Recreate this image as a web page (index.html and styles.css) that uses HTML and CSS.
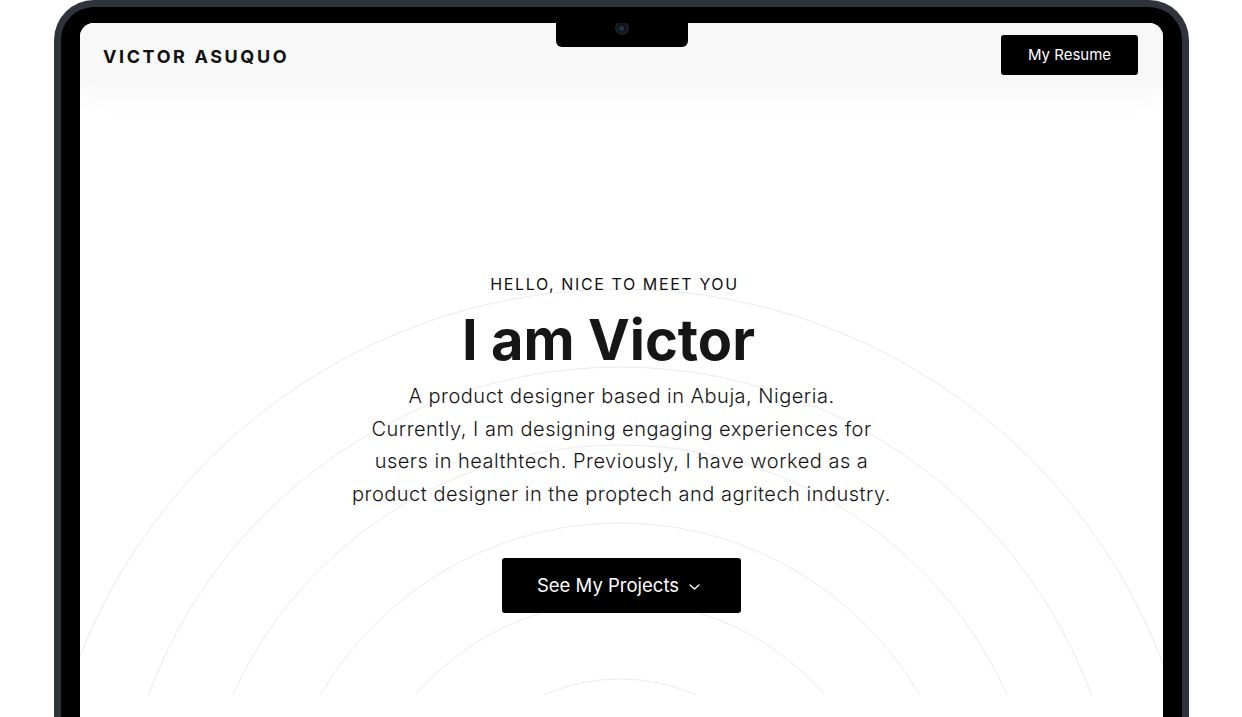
FILE: index.html
```html
<!DOCTYPE html>
<html lang="en">
<head>
<meta charset="utf-8">
<title>Victor Asuquo</title>
<link rel="stylesheet" href="styles.css">
</head>
<body>
<div class="device">
  <div class="screen">
    <div class="notch"><span class="camera"><span class="lens"></span></span></div>
    <header class="topbar">
      <a class="logo" href="#">VICTOR ASUQUO</a>
      <a class="btn btn-resume" href="#">My Resume</a>
    </header>
    <section class="hero">
      <svg class="rings" viewBox="0 0 1083 608" preserveAspectRatio="none" aria-hidden="true">
        <circle cx="540" cy="783" r="191"/>
        <circle cx="540" cy="783" r="269"/>
        <circle cx="540" cy="783" r="347"/>
        <circle cx="540" cy="783" r="425"/>
        <circle cx="540" cy="783" r="503"/>
        <circle cx="540" cy="783" r="581"/>
      </svg>
      <div class="hero-content">
        <p class="eyebrow">HELLO, NICE TO MEET YOU</p>
        <h1 class="title">I am Victor</h1>
        <p class="intro">A product designer based in Abuja, Nigeria.<br>Currently, I am designing engaging experiences for<br>users in healthtech. Previously, I have worked as a<br>product designer in the proptech and agritech industry.</p>
        <a class="btn btn-projects" href="#">See My Projects
          <svg class="chev" viewBox="0 0 11 6" aria-hidden="true"><polyline points="1,1 5.5,5 10,1"/></svg>
        </a>
      </div>
    </section>
  </div>
</div>
</body>
</html>
```
FILE: styles.css
```css
* { box-sizing: border-box; }
html, body { margin: 0; padding: 0; background: #fff; overflow: hidden; }
body { font-family: "Inter", "Lato", sans-serif; color: #1a1a1a; }

.device {
  margin-left: 54px;
  width: 1135px;
  height: 717px;
  border: 7px solid #2f333c;
  border-bottom: 0;
  border-radius: 40px 40px 0 0;
  background: #000;
  padding: 16px 19px 0 19px;
}

.screen {
  position: relative;
  height: 100%;
  background: #fff;
  border-radius: 14px 14px 0 0;
  overflow: hidden;
}

.notch {
  position: absolute;
  top: 0;
  left: 50%;
  transform: translateX(-50%);
  width: 132px;
  height: 24px;
  background: #000;
  border-radius: 0 0 6px 6px;
  z-index: 5;
  display: flex;
  justify-content: center;
}
.camera {
  margin-top: -2px;
  width: 14px;
  height: 14px;
  border-radius: 50%;
  background: #101318;
  border: 2px solid #1b1f26;
  display: flex;
  align-items: center;
  justify-content: center;
}
.lens {
  width: 5px;
  height: 5px;
  border-radius: 50%;
  background: #1c3550;
}

.topbar {
  position: relative;
  z-index: 3;
  height: 64px;
  background: #f8f8f8;
  display: flex;
  align-items: center;
  justify-content: space-between;
  padding: 0 25px 0 23px;
  box-shadow: 0 10px 28px rgba(0, 0, 0, 0.035);
}
.logo {
  font-weight: 700;
  font-size: 18px;
  letter-spacing: 2.6px;
  color: #111;
  text-decoration: none;
  margin-top: 3px;
}
.btn {
  display: inline-flex;
  align-items: center;
  justify-content: center;
  background: #000;
  color: #fff;
  text-decoration: none;
  border-radius: 3px;
}
.btn-resume {
  width: 137px;
  height: 40px;
  font-size: 15px;
  margin-top: -1px;
}

.hero {
  position: relative;
  height: 608px;
  overflow: hidden;
}
.rings {
  position: absolute;
  left: 0;
  top: 0;
  width: 100%;
  height: 100%;
  z-index: 0;
}
.rings circle {
  fill: none;
  stroke: #ebebeb;
  stroke-width: 1;
}
.hero-content {
  position: relative;
  z-index: 1;
  display: flex;
  flex-direction: column;
  align-items: center;
  text-align: center;
  padding-top: 187px;
}
.eyebrow {
  margin: 0;
  padding-right: 14px;
  font-size: 16px;
  line-height: 20px;
  letter-spacing: 1.6px;
  color: #111;
}
.title {
  margin: 14px 0 0;
  padding-right: 26px;
  font-size: 56px;
  line-height: 64px;
  font-weight: 700;
  color: #161616;
}
.intro {
  margin: 8px 0 0;
  font-size: 20px;
  line-height: 32.7px;
  letter-spacing: 0.5px;
  font-weight: 300;
  color: #151515;
}
.btn-projects {
  margin-top: 47px;
  padding-right: 6px;
  width: 239px;
  height: 55px;
  font-size: 18.5px;
  gap: 10px;
}
.chev {
  width: 11px;
  height: 6px;
  margin-top: 3px;
}
.chev polyline {
  fill: none;
  stroke: #fff;
  stroke-width: 1.4;
  stroke-linecap: round;
  stroke-linejoin: round;
}
```
